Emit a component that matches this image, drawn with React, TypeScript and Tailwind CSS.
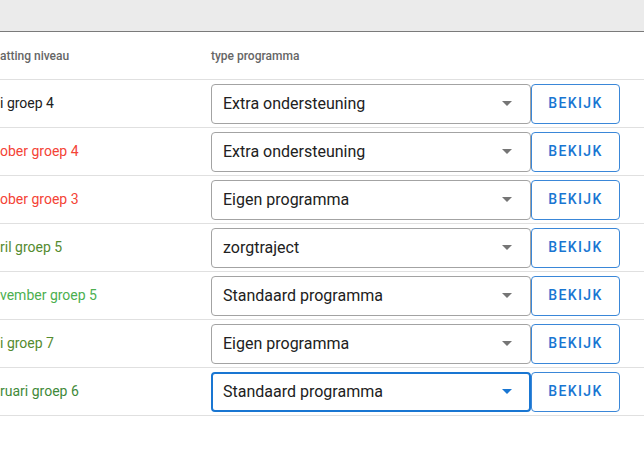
import React from "react";

const rows = [
  { label: "i groep 4", color: "text-[#212121]", value: "Extra ondersteuning" },
  { label: "ober groep 4", color: "text-[#f44336]", value: "Extra ondersteuning" },
  { label: "ober groep 3", color: "text-[#f44336]", value: "Eigen programma" },
  { label: "ril groep 5", color: "text-[#558b2f]", value: "zorgtraject" },
  { label: "vember groep 5", color: "text-[#4caf50]", value: "Standaard programma" },
  { label: "i groep 7", color: "text-[#558b2f]", value: "Eigen programma" },
  { label: "ruari groep 6", color: "text-[#3f8a3a]", value: "Standaard programma", focused: true },
];

function Caret({ blue }: { blue?: boolean }) {
  return (
    <svg width="10" height="5" viewBox="0 0 10 5" className="shrink-0">
      <path d="M0 0 L10 0 L5 5 Z" fill={blue ? "#1976d2" : "#757575"} />
    </svg>
  );
}

export default function App() {
  return (
    <div
      className="w-[644px] h-[474px] bg-white overflow-hidden"
      style={{ fontFamily: "Roboto, 'Liberation Sans', sans-serif" }}
    >
      <div className="h-[31px] bg-[#ebebeb] border-b border-[#7a7a7a] box-content" />
      <div className="flex h-[48px] items-center border-b border-[#e0e0e0]">
        <div className="w-[211px] text-[12px] font-medium text-[#666666]">atting niveau</div>
        <div className="text-[12px] font-medium text-[#666666]">type programma</div>
      </div>
      {rows.map((r, i) => (
        <div key={i} className="flex h-[48px] items-center border-b border-[#e0e0e0]">
          <div className={`w-[211px] text-[14px] ${r.color}`}>{r.label}</div>
          <div className="flex items-center">
            <div
              className={
                r.focused
                  ? "flex h-[40px] w-[320px] items-center justify-between rounded-[4px] border-2 border-[#1976d2] pl-[10px] pr-[17px]"
                  : "flex h-[40px] w-[320px] items-center justify-between rounded-[4px] border border-[#a3a3a3] pl-[11px] pr-[18px]"
              }
            >
              <span className="text-[16px] text-[#212121]">{r.value}</span>
              <Caret blue={r.focused} />
            </div>
            <div className="flex h-[40px] w-[89px] items-center justify-center rounded-[4px] border border-[#3a87d8] text-[14px] font-medium tracking-[1.4px] text-[#1976d2]">
              BEKIJK
            </div>
          </div>
        </div>
      ))}
    </div>
  );
}
